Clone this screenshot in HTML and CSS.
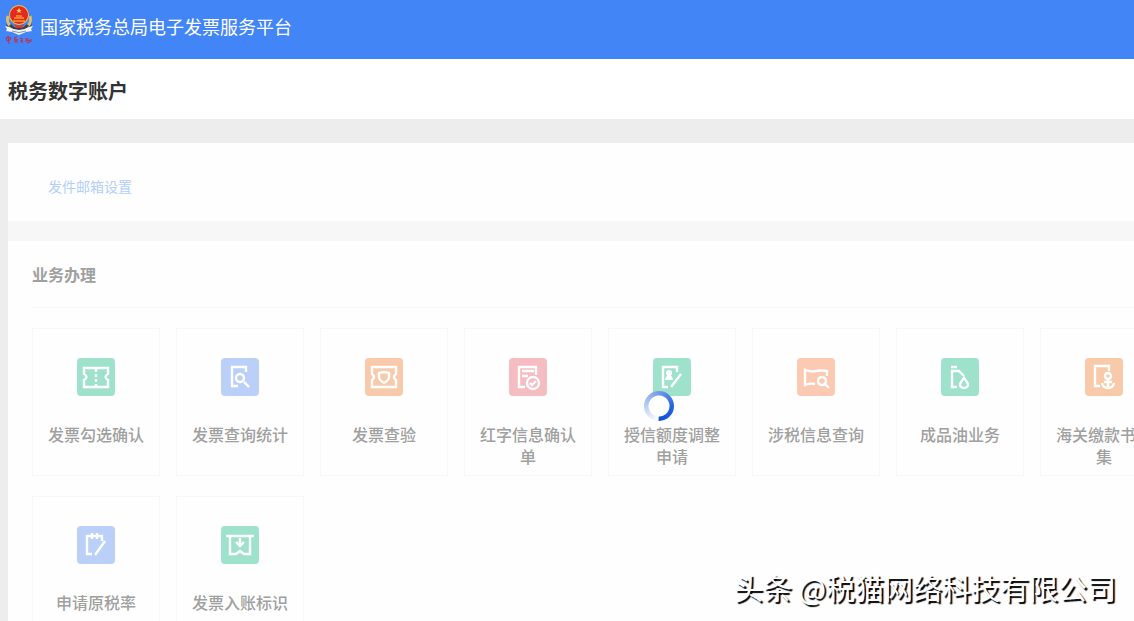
FILE: index.html
```html
<!DOCTYPE html>
<html lang="zh-CN">
<head>
    <meta charset="UTF-8">
    <title>国家税务总局电子发票服务平台</title>
    <link rel="stylesheet" href="styles.css">
</head>
<body>
    <header class="top-bar">
        <svg class="logo" viewBox="0 0 30 42" aria-hidden="true">
            <path d="M3 17 Q0 25 9 28 L15 30 L21 28 Q30 25 27 17 L24 25 L15 27 L6 25Z" fill="#4c5261"/>
            <path d="M4 12 Q1 23 15 25 Q29 23 26 12" fill="none" stroke="#d9bd72" stroke-width="3"/>
            <path d="M6 21 Q15 30 24 21" fill="none" stroke="#39404f" stroke-width="3"/>
            <circle cx="15" cy="11" r="10" fill="#f0c63c"/>
            <circle cx="15" cy="11" r="9" fill="#e32920"/>
            <path d="M15 4l1 2h2l-2 1 1 2-2-1-2 1 1-2-2-1h2z" fill="#ffe04a"/>
            <path d="M10 14h10M12 12h6M9 17h12" stroke="#ffcf3c" stroke-width="1"/>
            <path d="M10 20q5 3 10 0l-2 4h-6z" fill="#d9362b"/>
            <path d="M1 22l4 1q10 6 20 0l4-1-2 3 1 2-6 1-7 3-7-3-6-1 1-2z" fill="#f3f4f5"/>
            <path d="M8 27q7 3 14 0" fill="none" stroke="#8995ac" stroke-width="1"/>
            <path d="M2 34q3-2 5 0l-1 2-3 1zM4 32l1 8M10 34l3-1M10 36h4M11 34v5M13 35v4M16 34l2 1M16 37h3M18 34v5M22 34v4M24 34l-1 3 3-1v2l-3 1M27 35v3" fill="none" stroke="#c52d45" stroke-width="1"/>
        </svg>
        <span class="site-name">国家税务总局电子发票服务平台</span>
    </header>

    <div class="page-title">
        <h1>税务数字账户</h1>
    </div>

    <main class="content">
        <section class="mail-panel">
            <a href="#">发件邮箱设置</a>
        </section>

        <section class="business-panel">
            <h2>业务办理</h2>
            <div class="card-grid">
                <a class="card" href="#">
                    <svg class="icon green" viewBox="0 0 38 38" aria-hidden="true">
                        <path d="M7 10h24v6q-5 3 0 6v7H7v-7q5-3 0-6z"/>
                        <path d="M19 11v17" stroke-dasharray="3 2"/>
                    </svg>
                    <span>发票勾选确认</span>
                </a>
                <a class="card" href="#">
                    <svg class="icon blue" viewBox="0 0 38 38" aria-hidden="true">
                        <path d="M25 14V9H11v19h6"/>
                        <circle cx="19" cy="20" r="4"/>
                        <path d="M23 24l5 5"/>
                    </svg>
                    <span>发票查询统计</span>
                </a>
                <a class="card" href="#">
                    <svg class="icon orange" viewBox="0 0 38 38" aria-hidden="true">
                        <path d="M7 9h24v7q-4 3 0 6v7H7v-7q4-3 0-6z"/>
                        <path d="M19 14l5 1v4q0 3-5 6-5-3-5-6v-4z"/>
                    </svg>
                    <span>发票查验</span>
                </a>
                <a class="card" href="#">
                    <svg class="icon red" viewBox="0 0 38 38" aria-hidden="true">
                        <path d="M27 17V9H10v20h6M13 13h12M13 18h6"/>
                        <circle cx="24" cy="25" r="6"/>
                        <path d="M21 25l2 2 4-4"/>
                    </svg>
                    <span>红字信息确认单</span>
                </a>
                <a class="card" href="#">
                    <svg class="icon green" viewBox="0 0 38 38" aria-hidden="true">
                        <path d="M24 14V9H10v20h5M28 16L18 29"/>
                        <circle cx="16" cy="15" r="3" class="solid"/>
                        <path d="M12 22q1-5 4-5t4 5z" class="solid"/>
                    </svg>
                    <span>授信额度调整申请</span>
                </a>
                <a class="card" href="#">
                    <svg class="icon salmon" viewBox="0 0 38 38" aria-hidden="true">
                        <path d="M18 26q-5-1-10 1V12q6 2 11 1t11 0v5"/>
                        <circle cx="25" cy="23" r="4"/>
                        <path d="M28 26l4 4"/>
                    </svg>
                    <span>涉税信息查询</span>
                </a>
                <a class="card" href="#">
                    <svg class="icon green" viewBox="0 0 38 38" aria-hidden="true">
                        <path d="M10 9h6M16 29h-5V13h7l5 5"/>
                        <path d="M23 20q-4 5-4 7a4 3 0 0 0 8 0q0-2-4-7z"/>
                    </svg>
                    <span>成品油业务</span>
                </a>
                <a class="card" href="#">
                    <svg class="icon orange" viewBox="0 0 38 38" aria-hidden="true">
                        <path d="M24 13V8H10v20h5"/>
                        <circle cx="23" cy="18" r="3"/>
                        <path d="M23 21v9M19 24h8M17 25q1 5 6 5t6-5"/>
                    </svg>
                    <span>海关缴款书采集</span>
                </a>
                <a class="card" href="#">
                    <svg class="icon blue" viewBox="0 0 38 38" aria-hidden="true">
                        <path d="M15 28h-5V10h15v5M15 7v6M20 7v6M28 15L18 29"/>
                    </svg>
                    <span>申请原税率</span>
                </a>
                <a class="card" href="#">
                    <svg class="icon green" viewBox="0 0 38 38" aria-hidden="true">
                        <path d="M5 10h28M9 10v18h6l4-3 4 3h6V10M19 12v8M15 16l4 4 4-4"/>
                    </svg>
                    <span>发票入账标识</span>
                </a>
            </div>
        </section>
    </main>

    <div class="spinner" role="status" aria-label="加载中"></div>
    <div class="watermark">头条 @税猫网络科技有限公司</div>
</body>
</html>
```

FILE: styles.css
```css
:root {
    --header-bg: #4285f6;
    --page-bg: #ededed;
    --panel-bg: #fefefe;
    --line: #f7f7f7;
    --muted: #a0a0a0;
    --green: #9fe2cc;
    --blue: #bad0f8;
    --orange: #f9caaa;
    --salmon: #fcc9b2;
    --red: #f5bdc2;
}

* {
    box-sizing: border-box;
}

body {
    position: relative;
    display: flex;
    flex-direction: column;
    height: 100vh;
    margin: 0;
    overflow: hidden;
    background-color: var(--page-bg);
    font-family: "Noto Sans CJK SC", sans-serif;
}

h1,
h2 {
    margin: 0;
}

a {
    text-decoration: none;
}

.top-bar {
    display: flex;
    flex-shrink: 0;
    align-items: flex-start;
    gap: 6px;
    padding: 4px 4px 11px;
    background-color: var(--header-bg);
    color: #fff;
}

.logo {
    width: 30px;
    height: 42px;
}

.site-name {
    font-size: 18px;
    line-height: 44px;
}

.page-title {
    flex-shrink: 0;
    padding: 18px 8px 14px;
    background-color: #fff;
}

.page-title h1 {
    color: #333;
    font-size: 20px;
    line-height: 28px;
}

.content {
    display: flex;
    flex: 1;
    flex-direction: column;
    gap: 20px;
    min-height: 0;
    margin: 24px 0 0 8px;
    overflow: hidden;
    background-color: var(--line);
}

.mail-panel {
    flex-shrink: 0;
    padding: 31px 40px 23px;
    background-color: var(--panel-bg);
    font-size: 14px;
    line-height: 24px;
}

.mail-panel a {
    color: #b3cffb;
}

.business-panel {
    flex: 1 0 auto;
    padding: 0 0 20px 24px;
    background-color: var(--panel-bg);
}

.business-panel h2 {
    margin-bottom: 20px;
    padding: 22px 0;
    border-bottom: 1px solid var(--line);
    color: var(--muted);
    font-size: 16px;
    font-weight: 700;
    line-height: 22px;
}

.card-grid {
    display: grid;
    grid-template-columns: repeat(8, 128px);
    grid-auto-rows: 148px;
    gap: 20px 16px;
}

.card {
    display: flex;
    flex-direction: column;
    align-items: center;
    gap: 27px;
    padding: 29px 15px 0;
    border: 1px solid var(--line);
    color: var(--muted);
    font-size: 16px;
    font-weight: 500;
    line-height: 22px;
    text-align: center;
}

.icon {
    flex-shrink: 0;
    width: 38px;
    height: 38px;
    border-radius: 4px;
    fill: none;
    stroke: #fff;
    stroke-width: 2.4;
}

.icon .solid {
    fill: #fff;
    stroke: none;
}

.green {
    background-color: var(--green);
}

.blue {
    background-color: var(--blue);
}

.orange {
    background-color: var(--orange);
}

.salmon {
    background-color: var(--salmon);
}

.red {
    background-color: var(--red);
}

/* loading ring over the cards */
.spinner {
    position: absolute;
    top: 391px;
    left: 644px;
    width: 30px;
    height: 30px;
    border-radius: 50%;
    background: radial-gradient(circle, #fff 10px, transparent 11px), conic-gradient(#6f9bea, #2764df 25%, #0d51d4 50%, #fff 51%, #d6e2fa 65%, #6f9bea);
}

.watermark {
    position: absolute;
    right: 18px;
    bottom: 14px;
    color: #fff;
    font-size: 29px;
    line-height: 40px;
    text-shadow: 2px 2px 1px #000;
    white-space: nowrap;
}
```
